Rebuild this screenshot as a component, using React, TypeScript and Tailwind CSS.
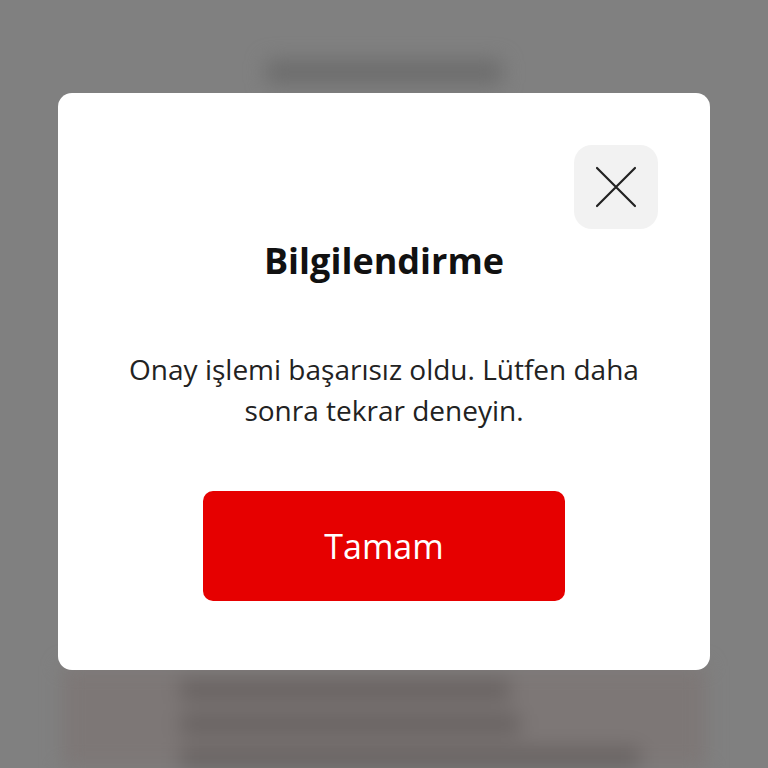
export default function App() {
  return (
    <div
      className="relative h-[768px] w-[768px] overflow-hidden bg-[#808080]"
      style={{ fontFamily: "'Open Sans', Lato, sans-serif" }}
    >
      {/* blurred page behind the dialog */}
      <div className="flex h-full flex-col items-center blur-[10px]">
        <div className="mt-[60px] h-[26px] w-[236px] rounded bg-[#6c6c6c]" />
        <div className="mt-[582px] flex w-[644px] flex-1 flex-col gap-[14px] bg-[#7d7776] px-[118px] pt-[14px]">
          <div className="h-[20px] w-[330px] rounded bg-[#676160]" />
          <div className="h-[20px] w-[340px] rounded bg-[#676160]" />
          <div className="h-[20px] w-[460px] rounded bg-[#676160]" />
        </div>
      </div>

      {/* dialog */}
      <div className="absolute left-[58px] top-[93px] flex h-[577px] w-[652px] flex-col items-center rounded-[14px] bg-white px-[52px]">
        <button className="mt-[52px] flex h-[84px] w-[84px] items-center justify-center self-end rounded-[18px] bg-[#f2f2f2]">
          <svg width="42" height="42" viewBox="0 0 42 42" fill="none" stroke="#222" strokeWidth="2.2" strokeLinecap="round">
            <path d="M2 2 L40 40 M40 2 L2 40" />
          </svg>
        </button>
        <h2 className="mt-[12px] text-[36px] font-bold leading-[40px] text-[#111]">Bilgilendirme</h2>
        <p className="mt-[68px] text-center text-[28px] leading-[41px] text-[#222]">
          Onay işlemi başarısız oldu. Lütfen daha
          <br />
          sonra tekrar deneyin.
        </p>
        <button className="mt-[60px] h-[110px] w-[362px] rounded-[10px] bg-[#e60000] text-[34px] text-white">
          Tamam
        </button>
      </div>
    </div>
  );
}
